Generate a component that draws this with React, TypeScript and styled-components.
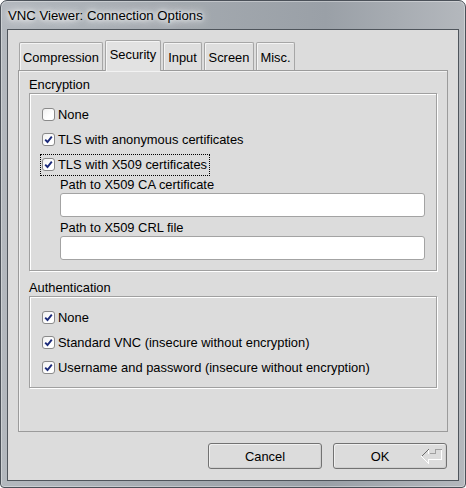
import React from "react";
import styled, { createGlobalStyle } from "styled-components";

const Global = createGlobalStyle`
  html, body { margin: 0; padding: 0; }
  body {
    width: 466px; height: 488px; overflow: hidden; background: #ffffff;
    font-family: "Liberation Sans", Arial, sans-serif; font-size: 12.9px; color: #000;
  }
  * { box-sizing: border-box; }
`;

const Window = styled.div`
  width: 466px;
  height: 488px;
  border: 1px solid #4b5159;
  border-radius: 7px 7px 4px 4px;
  background: linear-gradient(90deg, #b3b8be 0%, #a3a9af 40%, #9aa0a7 70%, #b4b8bd 100%);
  box-shadow: inset 0 0 0 1px rgba(255, 255, 255, 0.35);
  display: flex;
  flex-direction: column;
  padding: 0 6px 6px 6px;
`;

const TitleBar = styled.div`
  height: 28px;
  display: flex;
  align-items: center;
  padding-left: 1px;
  flex: none;
`;

const TitleText = styled.span`
  font-family: "Liberation Sans", Arial, sans-serif;
  font-size: 13.2px;
  color: #000;
  text-shadow: 0 0 4px #fff, 0 0 8px #fff, 0 0 12px rgba(255, 255, 255, 0.9);
`;

const Client = styled.div`
  flex: 1;
  border: 1px solid #4f555c;
  background: #dcdcdc;
  display: flex;
  flex-direction: column;
  padding: 10px 10px 11px 10px;
`;

const TabBar = styled.div`
  display: flex;
  align-items: flex-end;
  height: 31px;
  margin-bottom: -1px;
  padding-left: 1px;
  gap: 2px;
  position: relative;
  z-index: 1;
  flex: none;
`;

const Tab = styled.div<{ $w: number; $active?: boolean }>`
  width: ${(p) => p.$w}px;
  height: ${(p) => (p.$active ? 31 : 28)}px;
  margin-bottom: ${(p) => (p.$active ? 0 : 1)}px;
  border: 1px solid #a6a6a6;
  border-bottom: none;
  border-radius: 2px 2px 0 0;
  background: ${(p) => (p.$active ? "#e2e2e2" : "#dedede")};
  box-shadow: inset 1px 1px 0 #f4f4f4;
  display: flex;
  justify-content: center;
  align-items: ${(p) => (p.$active ? "flex-start" : "center")};
  padding-top: ${(p) => (p.$active ? 6 : 1)}px;
  white-space: nowrap;
`;

const Pane = styled.div`
  flex: 1;
  border: 1px solid #9b9b9b;
  background: #dcdcdc;
  box-shadow: inset 1px 1px 0 #f2f2f2;
  display: flex;
  flex-direction: column;
  padding: 6px 10px 0 10px;
`;

const GroupTitle = styled.div<{ $gap?: number }>`
  line-height: 16px;
  height: 16px;
  margin-top: ${(p) => p.$gap ?? 0}px;
`;

const GroupBox = styled.div<{ $pb: number }>`
  border: 1px solid #a0a0a0;
  box-shadow: 1px 1px 0 #ffffff, inset 1px 1px 0 #ffffff;
  padding: 8px 11px ${(p) => p.$pb}px 12px;
  display: flex;
  flex-direction: column;
`;

const Row = styled.div`
  height: 25px;
  display: flex;
  align-items: center;
`;

const CheckControl = styled.label<{ $focused?: boolean }>`
  display: inline-flex;
  align-items: center;
  height: 22px;
  margin-left: -2px;
  padding: 0 2px 0 1px;
  border: 1px dotted ${(p) => (p.$focused ? "#000" : "transparent")};
  gap: 3px;
  white-space: nowrap;
`;

const Box = styled.span`
  width: 13px;
  height: 13px;
  border: 1px solid #8a8a8a;
  border-radius: 3px;
  background: linear-gradient(135deg, #f0f0f0 0%, #ffffff 60%);
  display: inline-flex;
  align-items: center;
  justify-content: center;
  flex: none;
`;

const FieldLabel = styled.div<{ $gap?: number }>`
  margin-left: 18px;
  line-height: 16px;
  height: 16px;
  margin-top: ${(p) => p.$gap ?? 0}px;
`;

const TextInput = styled.div`
  margin-left: 18px;
  height: 24px;
  border: 1px solid #a3a3a3;
  border-radius: 3px;
  background: #ffffff;
`;

const ButtonRow = styled.div`
  margin-top: 11px;
  display: flex;
  justify-content: flex-end;
  gap: 11px;
  padding-right: 1px;
  flex: none;
`;

const Button = styled.div<{ $pr?: number }>`
  position: relative;
  width: 114px;
  height: 26px;
  border: 1px solid #727272;
  border-radius: 3px;
  background: #dcdcdc;
  box-shadow: inset 1px 1px 0 #f0f0f0, inset -1px -1px 0 #cfcfcf;
  display: flex;
  align-items: center;
  justify-content: center;
  padding-right: ${(p) => p.$pr ?? 0}px;
`;

const EnterIcon = styled.svg`
  position: absolute;
  left: 84px;
  top: 2px;
`;

const Check = ({ on }: { on: boolean }) => (
  <Box>
    {on && (
      <svg width="9" height="9" viewBox="0 0 9 9">
        <path d="M1.2 4.6 L3.5 7 L7.8 1.6" fill="none" stroke="#1b2a7a" strokeWidth="1.9" />
      </svg>
    )}
  </Box>
);

const CheckItem = ({ on, text, focused }: { on: boolean; text: string; focused?: boolean }) => (
  <Row>
    <CheckControl $focused={focused}>
      <Check on={on} />
      <span>{text}</span>
    </CheckControl>
  </Row>
);

const ReturnArrow = () => (
  <EnterIcon width="26" height="20" viewBox="0 0 26 20">
    <g fill="none" strokeWidth="1" shapeRendering="crispEdges">
      <path d="M3.5 10.5 L10.5 17.5 M10.5 17.5 L10.5 13.5 L23.5 13.5 L23.5 3.5 M10.5 7.5 L10.5 3.5" stroke="#ffffff" />
      <path d="M3.5 10.5 L10.5 3.5" stroke="#6a6a6a" />
      <path d="M11.5 7.5 L17.5 7.5 L17.5 3.5 L23.5 3.5" stroke="#a0a0a0" />
    </g>
  </EnterIcon>
);

export default function App() {
  return (
    <>
      <Global />
      <Window>
        <TitleBar>
          <TitleText>VNC Viewer: Connection Options</TitleText>
        </TitleBar>
        <Client>
          <TabBar>
            <Tab $w={84}>Compression</Tab>
            <Tab $w={56} $active>Security</Tab>
            <Tab $w={39}>Input</Tab>
            <Tab $w={50}>Screen</Tab>
            <Tab $w={39}>Misc.</Tab>
          </TabBar>
          <Pane>
            <GroupTitle>Encryption</GroupTitle>
            <GroupBox $pb={10}>
              <CheckItem on={false} text="None" />
              <CheckItem on text="TLS with anonymous certificates" />
              <CheckItem on focused text="TLS with X509 certificates" />
              <FieldLabel>Path to X509 CA certificate</FieldLabel>
              <TextInput />
              <FieldLabel $gap={3}>Path to X509 CRL file</FieldLabel>
              <TextInput />
            </GroupBox>
            <GroupTitle $gap={9}>Authentication</GroupTitle>
            <GroupBox $pb={7}>
              <CheckItem on text="None" />
              <CheckItem on text="Standard VNC (insecure without encryption)" />
              <CheckItem on text="Username and password (insecure without encryption)" />
            </GroupBox>
          </Pane>
          <ButtonRow>
            <Button>Cancel</Button>
            <Button $pr={20}>
              OK
              <ReturnArrow />
            </Button>
          </ButtonRow>
        </Client>
      </Window>
    </>
  );
}
